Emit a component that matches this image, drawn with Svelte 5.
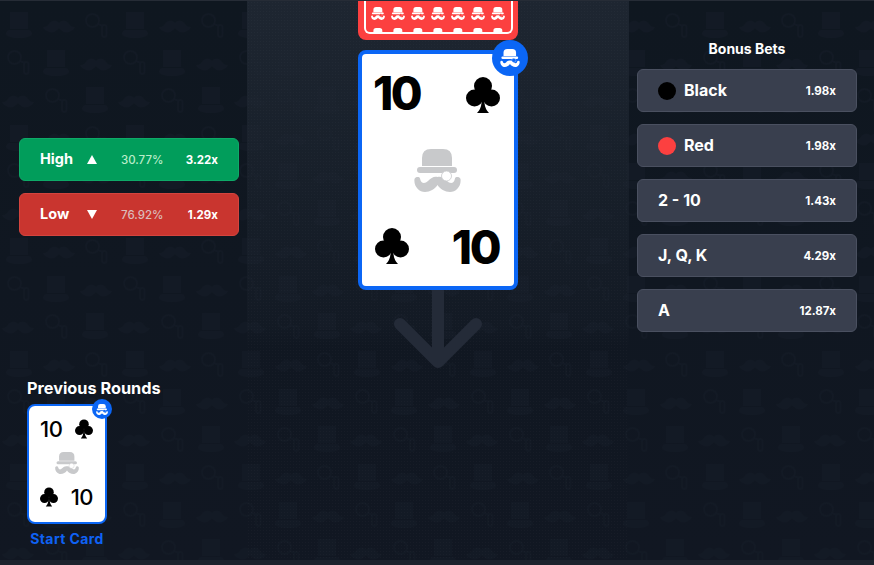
<script>
  // tile of the wallpaper: three rows, each one shifted by one item
  const tile = [
    ["hat", 6, 12], ["tache", 43, 20], ["mono", 85, 13],
    ["mono", 7, 50], ["hat", 43, 50], ["tache", 80, 58],
    ["tache", 2, 95], ["mono", 45, 88], ["hat", 82, 87]
  ];
  const highLow = [
    { label: "High", dir: "up", pct: "30.77%", mult: "3.22x", cls: "high" },
    { label: "Low", dir: "down", pct: "76.92%", mult: "1.29x", cls: "low" }
  ];
  const bonus = [
    { label: "Black", dot: "#000", mult: "1.98x" },
    { label: "Red", dot: "#fc4040", mult: "1.98x" },
    { label: "2 - 10", mult: "1.43x" },
    { label: "J, Q, K", mult: "4.29x" },
    { label: "A", mult: "12.87x" }
  ];
  const backIcons = Array.from({ length: 14 });
</script>

{#snippet logo(cls)}
  <svg class={cls} viewBox="0 0 47 43" aria-hidden="true">
    <path d="M8 17V9Q8 0 17 0H29Q38 0 38 9V17Z" fill="currentColor" />
    <rect x="3" y="18" width="40" height="6" rx="3" fill="currentColor" />
    <path d="M23.500 28C20 27 17 29 14 32C11 35 7 35 6 29.500C5.500 27.500 1.500 27.500 0.500 30C-0.500 37 5 43 11 43C16 43 21 40 23.500 36C26 40 31 43 36 43C42 43 47.500 37 46.500 30C45.500 27.500 41.500 27.500 41 29.500C40 35 36 35 33 32C30 29 27 27 23.500 28Z" fill="currentColor" />
    <circle class="ring" cx="32.500" cy="27" r="5" stroke="currentColor" stroke-width="0.800" />
  </svg>
{/snippet}

{#snippet club(cls)}
  <svg class={cls} viewBox="0 0 34 36" aria-hidden="true">
    <circle cx="17" cy="9" r="9" />
    <circle cx="8.500" cy="21" r="8.500" />
    <circle cx="25.500" cy="21" r="8.500" />
    <path d="M15.500 14H18.500V26Q19 32 23 36H11Q15 32 15.500 26Z" />
  </svg>
{/snippet}

{#snippet card(size)}
  <div class="card {size}">
    <div class="badge">{@render logo("badge-icon")}</div>
    <div class="card-row top">
      <span class="rank">10</span>
      {@render club("suit")}
    </div>
    {@render logo("card-logo")}
    <div class="card-row bottom">
      {@render club("suit")}
      <span class="rank">10</span>
    </div>
  </div>
{/snippet}

<div class="game">
  <svg class="wallpaper" width="874" height="565" aria-hidden="true">
    <defs>
      <symbol id="hat" viewBox="0 0 26 26" width="26" height="26">
        <path d="M4 0H22V17H4Z" />
        <path d="M0 22Q1 18 4 18H22Q25 18 26 22Q24 26 13 26Q2 26 0 22Z" />
      </symbol>
      <symbol id="tache" viewBox="0 0 32 13" width="32" height="13">
        <path d="M16 3C13 0 9 0 6 4C4 7 2 7 0 7C2 11 7 13 11 12C13 11 15 9 16 8C17 9 19 11 21 12C25 13 30 11 32 7C30 7 28 7 26 4C23 0 19 0 16 3Z" />
      </symbol>
      <symbol id="mono" viewBox="0 0 24 25" width="24" height="25">
        <circle cx="7.500" cy="7.500" r="6.500" fill="none" stroke="currentColor" stroke-width="1.500" />
        <path d="M13 11L18 13" fill="none" stroke="currentColor" stroke-width="1.500" />
        <rect x="17" y="12" width="4.500" height="12" rx="2.200" fill="none" stroke="currentColor" stroke-width="1.500" />
      </symbol>
      <pattern id="wall" width="116" height="113" patternUnits="userSpaceOnUse">
        {#each tile as [name, x, y]}
          <use href="#{name}" {x} {y} />
        {/each}
      </pattern>
    </defs>
    <rect width="874" height="565" fill="url(#wall)" />
  </svg>

  <section class="left">
    <div class="choices">
      {#each highLow as b}
        <button class="choice {b.cls}">
          <span class="choice-label">{b.label}</span>
          <span class="tri {b.dir}"></span>
          <span class="pct">{b.pct}</span>
          <span class="mult">{b.mult}</span>
        </button>
      {/each}
    </div>

    <div class="previous">
      <h3>Previous Rounds</h3>
      {@render card("small")}
      <span class="start">Start Card</span>
    </div>
  </section>

  <section class="center">
    <div class="back">
      <div class="back-frame">
        {#each backIcons as _}
          {@render logo("back-icon")}
        {/each}
      </div>
    </div>
    {@render card("big")}
    <svg class="arrow" viewBox="0 0 96 80" width="96" height="80" aria-hidden="true">
      <path d="M48 0V70M10 34L48 72L86 34" fill="none" stroke="#242b38" stroke-width="12" stroke-linecap="round" stroke-linejoin="round" />
    </svg>
  </section>

  <section class="right">
    <h3>Bonus Bets</h3>
    {#each bonus as b}
      <button class="bet">
        {#if b.dot}<span class="dot" style:background={b.dot}></span>{/if}
        <span class="bet-label">{b.label}</span>
        <span class="bet-mult">{b.mult}</span>
      </button>
    {/each}
  </section>
</div>

<style>
  :global(body) {
    margin: 0;
    background: #101722;
  }
  .game {
    position: relative;
    width: 874px;
    height: 565px;
    overflow: hidden;
    box-sizing: border-box;
    display: grid;
    grid-template-columns: 247px 382px 245px;
    border-top: 1px solid #262c36;
    border-bottom: 5px solid #1d232d;
    background: linear-gradient(#0f1720, #111722);
    font-family: Inter, "Liberation Sans", sans-serif;
    color: #fff;
  }
  .wallpaper {
    position: absolute;
    top: -1px;
    left: 0;
    fill: #131a25;
    color: #131a25;
  }
  section {
    position: relative;
    min-width: 0;
  }
  h3 {
    margin: 0;
  }
  button {
    font: inherit;
    color: inherit;
    cursor: pointer;
  }

  .left {
    display: flex;
    flex-direction: column;
    justify-content: space-between;
    padding: 137px 8px 0 19px;
  }
  .choices {
    display: flex;
    flex-direction: column;
    gap: 12px;
  }
  .choice {
    height: 43px;
    display: grid;
    grid-template-columns: 47px 34px 60px 1fr;
    align-items: center;
    padding: 0 20px;
    border-radius: 6px;
    text-align: left;
  }
  .high {
    background: #019d5b;
    border: 1px solid #0eaa68;
  }
  .low {
    background: #c9352f;
    border: 1px solid #d4443e;
  }
  .choice-label {
    font-size: 14.500px;
    font-weight: 700;
    padding-bottom: 2px;
  }
  .tri {
    width: 0;
    height: 0;
    border-left: 5px solid transparent;
    border-right: 5px solid transparent;
  }
  .tri.up {
    border-bottom: 9px solid #fff;
  }
  .tri.down {
    border-top: 9px solid #fff;
  }
  .pct {
    font-size: 11.500px;
    font-weight: 500;
    white-space: nowrap;
  }
  .high .pct {
    color: #b8ecc9;
  }
  .low .pct {
    color: #dcbcbb;
  }
  .mult {
    font-size: 11.500px;
    font-weight: 700;
    text-align: right;
  }

  .previous {
    display: flex;
    flex-direction: column;
    align-items: flex-start;
    padding: 0 0 13px 8px;
  }
  .previous h3 {
    font-size: 16.300px;
    font-weight: 700;
    line-height: 20px;
    margin-bottom: 6px;
    white-space: nowrap;
  }
  .start {
    width: 80px;
    margin-top: 7px;
    text-align: center;
    white-space: nowrap;
    font-size: 14px;
    font-weight: 700;
    line-height: 16px;
    letter-spacing: 0.400px;
    color: #0f62f5;
  }

  .center {
    display: flex;
    flex-direction: column;
    align-items: center;
    background-image:
      radial-gradient(rgba(255, 255, 255, 0.025) 0.700px, transparent 1px),
      linear-gradient(#1e2631, rgba(30, 38, 49, 0.2) 58%, transparent 62%);
    background-size: 3px 3px, 100% 100%;
  }
  .back {
    flex: none;
    box-sizing: border-box;
    width: 160px;
    height: 39px;
    padding: 0 5px 6px 6px;
    margin-bottom: 10px;
    background: #fc4040;
    border-radius: 0 0 8px 8px;
  }
  .back-frame {
    box-sizing: border-box;
    height: 100%;
    overflow: hidden;
    display: grid;
    grid-template-columns: repeat(7, 14px);
    grid-auto-rows: 13px;
    gap: 8px 6px;
    padding: 6px 0 0 5px;
    border: 2px solid #fff;
    border-top: 0;
    border-radius: 0 0 6px 6px;
  }
  .back-icon {
    width: 14px;
    height: 13px;
    color: #fff;
    --ring: #fc4040;
  }
  .ring {
    fill: var(--ring);
  }

  .card {
    flex: none;
    position: relative;
    box-sizing: border-box;
    display: flex;
    flex-direction: column;
    justify-content: space-between;
    align-items: center;
    background: #fff;
    border: solid #0b66f5;
    color: #000;
  }
  .card-row {
    display: flex;
    align-self: stretch;
    justify-content: space-between;
    align-items: center;
  }
  .rank {
    font-weight: 800;
  }
  .suit {
    fill: #000;
  }
  .card-logo {
    color: #c8c9cb;
    --ring: #fff;
  }
  .badge {
    position: absolute;
    display: flex;
    align-items: center;
    justify-content: center;
    border-radius: 50%;
    background: #0b66f5;
    color: #fff;
    --ring: #0b66f5;
  }
  .big {
    width: 160px;
    height: 240px;
    padding: 21px 14px 21px 13px;
    border-width: 4px;
    border-radius: 8px;
  }
  .big .rank {
    font-size: 46px;
    line-height: 36px;
    letter-spacing: -2.500px;
    font-weight: 800;
  }
  .big .top .rank {
    margin-bottom: 3px;
    margin-left: -2px;
  }
  .big .bottom .rank {
    margin-top: 3px;
    margin-right: 1px;
  }
  .big .suit {
    width: 34px;
    height: 36px;
  }
  .big .card-logo {
    width: 47px;
    height: 43px;
  }
  .big .badge {
    width: 36px;
    height: 36px;
    top: -14px;
    right: -14px;
  }
  .big .badge-icon {
    width: 20px;
    height: 18px;
  }
  .small {
    width: 80px;
    height: 120px;
    padding: 12px 12px 14px 11px;
    border-width: 2px;
    border-radius: 8px;
  }
  .small .rank {
    font-size: 22px;
    font-weight: 500;
    line-height: 22px;
    letter-spacing: -0.500px;
  }
  .small .suit {
    width: 18px;
    height: 20px;
  }
  .small .card-logo {
    width: 24px;
    height: 22px;
  }
  .small .badge {
    width: 20px;
    height: 20px;
    top: -7px;
    right: -7px;
  }
  .small .badge-icon {
    width: 12px;
    height: 11px;
  }

  .right {
    display: flex;
    flex-direction: column;
    gap: 12px;
    padding: 40px 17px 0 8px;
  }
  .right h3 {
    font-size: 14px;
    font-weight: 700;
    line-height: 16px;
    text-align: center;
  }
  .bet {
    height: 43px;
    display: flex;
    align-items: center;
    gap: 8px;
    padding: 0 20px;
    background: #393f4e;
    border: 1px solid #4a5060;
    border-radius: 6px;
  }
  .dot {
    width: 18px;
    height: 18px;
    border-radius: 50%;
  }
  .bet-label {
    font-size: 16px;
    font-weight: 700;
    padding-bottom: 2px;
  }
  .bet-mult {
    margin-left: auto;
    font-size: 11.500px;
    font-weight: 700;
  }
</style>
